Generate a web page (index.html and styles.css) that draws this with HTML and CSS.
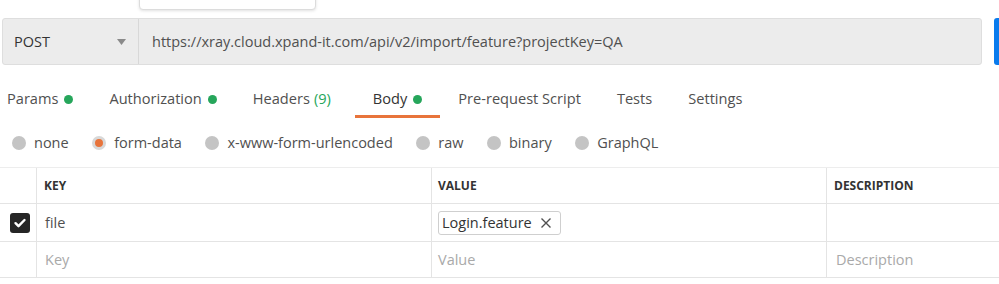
FILE: index.html
```html
<!DOCTYPE html>
<html>
<head>
<meta charset="utf-8">
<link rel="stylesheet" href="styles.css">
</head>
<body>
<div class="page">
  <div class="popup"></div>
  <div class="request">
    <div class="urlbar">
      <div class="method">
        <span>POST</span>
        <svg class="caret" width="9" height="6" viewBox="0 0 9 6"><path d="M0 0h9L4.5 6z" fill="#8a8a8a"/></svg>
      </div>
      <div class="url">https://xray.cloud.xpand-it.com/api/v2/import/feature?projectKey=QA</div>
    </div>
    <div class="send"></div>
  </div>

  <div class="tabs">
    <div class="tab">Params<span class="dot"></span></div>
    <div class="tab">Authorization<span class="dot"></span></div>
    <div class="tab">Headers <span class="count">(9)</span></div>
    <div class="tab active">Body<span class="dot"></span></div>
    <div class="tab">Pre-request Script</div>
    <div class="tab">Tests</div>
    <div class="tab">Settings</div>
  </div>

  <div class="radios">
    <div class="radio"><span class="circle"></span>none</div>
    <div class="radio"><span class="circle on"></span>form-data</div>
    <div class="radio"><span class="circle"></span>x-www-form-urlencoded</div>
    <div class="radio"><span class="circle"></span>raw</div>
    <div class="radio"><span class="circle"></span>binary</div>
    <div class="radio"><span class="circle"></span>GraphQL</div>
  </div>

  <div class="table">
    <div class="row head">
      <div class="cell chk"></div>
      <div class="cell key">KEY</div>
      <div class="cell val">VALUE</div>
      <div class="cell desc">DESCRIPTION</div>
    </div>
    <div class="row r1">
      <div class="cell chk">
        <span class="checkbox"><svg width="14" height="14" viewBox="0 0 14 14"><path d="M2.5 7.2l3 3 6-6.2" fill="none" stroke="#fff" stroke-width="2.4" stroke-linecap="round" stroke-linejoin="round"/></svg></span>
      </div>
      <div class="cell key">file</div>
      <div class="cell val"><span class="chip">Login.feature<svg class="x" width="12" height="12" viewBox="0 0 12 12"><path d="M1.5 1.5l9 9M10.5 1.5l-9 9" stroke="#505050" stroke-width="1.4"/></svg></span></div>
      <div class="cell desc"></div>
    </div>
    <div class="row r2">
      <div class="cell chk"></div>
      <div class="cell key ph">Key</div>
      <div class="cell val ph">Value</div>
      <div class="cell desc ph">Description</div>
    </div>
  </div>
</div>
</body>
</html>
```

FILE: styles.css
```css
* { box-sizing: border-box; }
html, body { margin: 0; padding: 0; background: #fff; }
body {
  font-family: "Open Sans", "Noto Sans", sans-serif;
  color: #505050;
  width: 999px;
  height: 284px;
  overflow: hidden;
}
.page { position: relative; }

.popup {
  position: absolute;
  left: 139px;
  top: -6px;
  width: 177px;
  height: 16px;
  background: #fff;
  border: 1px solid #dcdcdc;
  border-radius: 0 0 4px 4px;
  box-shadow: 0 1px 3px rgba(0,0,0,0.12);
}

.request {
  display: flex;
  gap: 12px;
  padding: 18px 0 0 2px;
}
.urlbar {
  display: flex;
  width: 980px;
  height: 47px;
  background: #ececec;
  border: 1px solid #dedede;
  border-radius: 3px;
}
.method {
  width: 136px;
  display: flex;
  align-items: center;
  justify-content: space-between;
  padding: 0 12px 0 11px;
  border-right: 1px solid #d8d8d8;
  font-size: 14.5px;
  color: #333;
}
.caret { margin-top: 1px; }
.url {
  display: flex;
  align-items: center;
  padding-left: 13px;
  font-size: 14.5px;
  color: #505050;
}
.send {
  flex: 1;
  height: 47px;
  background: #097bed;
  border-radius: 3px 0 0 3px;
}

.tabs {
  display: flex;
  margin: 17px 0 0 -11px;
  height: 36px;
}
.tab {
  display: flex;
  align-items: flex-start;
  padding: 6px 18px 0;
  font-size: 14.6px;
  color: #505050;
  height: 36px;
}
.tab.active { border-bottom: 3px solid #e8743b; color: #333; }
.dot {
  width: 9px;
  height: 9px;
  border-radius: 50%;
  background: #26a65b;
  margin: 7px 0 0 6px;
}
.count { color: #26a65b; margin-left: 4px; margin-right: 6px; }

.radios {
  display: flex;
  align-items: center;
  height: 49px;
  padding-left: 12px;
  gap: 23.5px;
}
.radio {
  display: flex;
  align-items: center;
  font-size: 14.5px;
  color: #505050;
}
.circle {
  width: 14px;
  height: 14px;
  border-radius: 50%;
  background: #c4c4c4;
  margin-right: 8px;
}
.circle.on {
  background: #e8743b;
  border: 3px solid #d8d8d8;
}

.table {
  border-top: 1px solid #ededed;
}
.row {
  display: flex;
  border-bottom: 1px solid #e4e4e4;
}
.row.head { height: 36px; }
.row.r1 { height: 38px; }
.row.r2 { height: 36px; }
.cell {
  display: flex;
  align-items: center;
  font-size: 14.5px;
  color: #505050;
}
.cell.chk { width: 37px; justify-content: center; border-right: 1px solid #e4e4e4; }
.cell.key { width: 395px; padding-left: 8px; border-right: 1px solid #e4e4e4; }
.cell.val { width: 395px; padding-left: 6px; border-right: 1px solid #e4e4e4; }
.cell.desc { flex: 1; padding-left: 9px; }
.head .cell {
  font-size: 12px;
  font-weight: 700;
  color: #333;
}
.head .cell.key { padding-left: 7px; }
.head .cell.desc { padding-left: 7px; }
.ph { color: #a9a9a9; }
.checkbox {
  width: 20px;
  height: 20px;
  background: #262626;
  border-radius: 3px;
  display: flex;
  align-items: center;
  justify-content: center;
  margin-left: 4px;
}
.chip {
  display: flex;
  align-items: center;
  height: 24px;
  padding: 0 8px 0 3px;
  border: 1px solid #cfcfcf;
  border-radius: 3px;
  color: #333;
  font-size: 14.5px;
}
.x { margin-left: 8px; }
```
